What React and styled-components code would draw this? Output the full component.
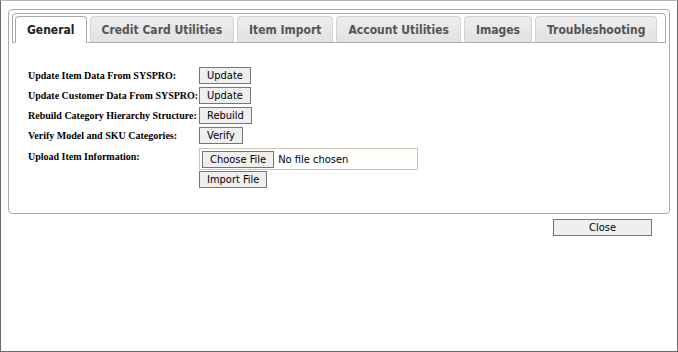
import React from "react";
import styled, { createGlobalStyle } from "styled-components";

const Global = createGlobalStyle`
  html, body { margin: 0; padding: 0; background: #fff; }
  * { box-sizing: border-box; }
`;

const Window = styled.div`
  width: 678px;
  height: 352px;
  border: 1px solid #6a6a6a;
  border-top-color: #b8b8b8;
  padding: 8px 7px 0 7px;
  background: #fff;
`;

const TabsPanel = styled.div`
  border: 1px solid #aaaaaa;
  border-radius: 4px;
  padding: 3px;
  background: #fff;
`;

const TabHeader = styled.div`
  display: flex;
  gap: 3px;
  border: 1px solid #aaaaaa;
  border-radius: 4px 4px 0 0;
  padding: 2px 2px 0 2px;
  background: #fff;
`;

const Tab = styled.div`
  height: 27px;
  margin-bottom: -1px;
  padding: 0 11px;
  display: flex;
  align-items: center;
  border: 1px solid ${(p) => (p.$active ? "#aaaaaa" : "#d3d3d3")};
  border-bottom-color: ${(p) => (p.$active ? "#fff" : "#aaaaaa")};
  border-radius: 4px 4px 0 0;
  background: ${(p) =>
    p.$active ? "#fff" : "linear-gradient(#ededed, #e2e2e2)"};
  color: ${(p) => (p.$active ? "#212121" : "#555555")};
  font-family: "DejaVu Sans Condensed", "DejaVu Sans", sans-serif;
  font-weight: bold;
  font-size: 12px;
  white-space: nowrap;
  cursor: pointer;
`;

const Content = styled.div`
  padding: 24px 16px 22px 16px;
`;

const Form = styled.div`
  display: grid;
  grid-template-columns: 171px auto;
  justify-content: start;
  row-gap: 3px;
`;

const Label = styled.div`
  font-family: "Liberation Serif", "Times New Roman", serif;
  font-weight: bold;
  font-size: 10px;
  color: #000;
  display: flex;
  align-items: ${(p) => (p.$top ? "flex-start" : "center")};
  padding-top: ${(p) => (p.$top ? "4px" : "0")};
  height: ${(p) => (p.$top ? "auto" : "17px")};
  white-space: nowrap;
`;

const Cell = styled.div`
  display: flex;
  flex-direction: column;
  align-items: flex-start;
  gap: 1px;
  margin-top: ${(p) => p.$offset || 0}px;
`;

const Button = styled.button`
  height: 17px;
  padding: 0 7px;
  border: 1px solid #767676;
  border-radius: 0;
  background: #efefef;
  color: #000;
  font-family: "DejaVu Sans Condensed", "DejaVu Sans", sans-serif;
  font-size: 11px;
  line-height: 15px;
  cursor: pointer;
  ${(p) => (p.$width ? `width: ${p.$width}px;` : "")}
`;

const FileBox = styled.div`
  width: 219px;
  height: 22px;
  border: 1px solid #cbc5b1;
  display: flex;
  align-items: center;
  gap: 4px;
  padding: 0 2px;
`;

const FileText = styled.span`
  font-family: "DejaVu Sans Condensed", "DejaVu Sans", sans-serif;
  font-size: 11px;
  color: #000;
`;

const Footer = styled.div`
  display: flex;
  justify-content: flex-end;
  padding: 5px 18px 0 0;
`;

const tabs = [
  "General",
  "Credit Card Utilities",
  "Item Import",
  "Account Utilities",
  "Images",
  "Troubleshooting",
];

const rows = [
  ["Update Item Data From SYSPRO:", "Update"],
  ["Update Customer Data From SYSPRO:", "Update"],
  ["Rebuild Category Hierarchy Structure:", "Rebuild"],
  ["Verify Model and SKU Categories:", "Verify"],
];

export default function App() {
  return (
    <>
      <Global />
      <Window>
        <TabsPanel>
          <TabHeader>
            {tabs.map((t, i) => (
              <Tab key={t} $active={i === 0}>
                {t}
              </Tab>
            ))}
          </TabHeader>
          <Content>
            <Form>
              {rows.map(([label, btn]) => (
                <React.Fragment key={label}>
                  <Label>{label}</Label>
                  <Cell>
                    <Button>{btn}</Button>
                  </Cell>
                </React.Fragment>
              ))}
              <Label $top>Upload Item Information:</Label>
              <Cell $offset={1}>
                <FileBox>
                  <Button>Choose File</Button>
                  <FileText>No file chosen</FileText>
                </FileBox>
                <Button>Import File</Button>
              </Cell>
            </Form>
          </Content>
        </TabsPanel>
        <Footer>
          <Button $width={99}>Close</Button>
        </Footer>
      </Window>
    </>
  );
}
